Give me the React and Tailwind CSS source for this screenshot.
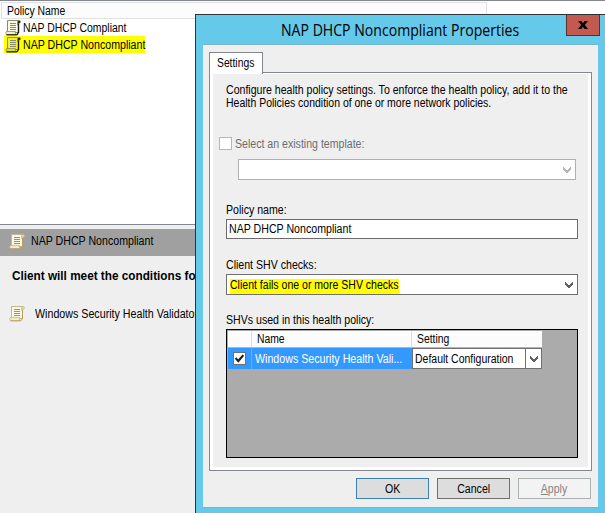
/**
 * App.jsx
 *
 * Network Policy Server console: health policy list with the
 * properties dialog of one policy open over it.
 */

import clsx from 'clsx'

export default function App() {
  return (
    <div className="relative h-[513px] w-[605px] overflow-hidden bg-[#efefef] font-['Liberation_Sans',sans-serif] text-[12px] leading-[14px] text-black">
      <PolicyList />
      <PolicyDetails />
      <PropertiesDialog />
    </div>
  )
}

// ── Console behind the dialog ─────────────────────────────────────────────────

function PolicyList() {
  return (
    <div className="h-[225px] border-y border-[#828790] bg-white pt-px">
      <div className="ml-px flex h-[17px] w-[486px] items-center border border-[#e0e0e0] bg-[#fcfcfc] pl-[5px]">
        <Text className="scale-x-[0.865]">Policy Name</Text>
      </div>
      <div className="flex h-[17px] items-center pl-[5px]">
        <ScrollIcon dark />
        <Text className="ml-[2px] scale-x-[0.87]">NAP DHCP Compliant</Text>
      </div>
      <div className="ml-[4px] flex h-[17px] w-[141px] items-center bg-[#ffff00] pl-px">
        <ScrollIcon dark yellow />
        <Text className="ml-[2px] scale-x-[0.885]">NAP DHCP Noncompliant</Text>
      </div>
    </div>
  )
}

function PolicyDetails() {
  return (
    <div className="pt-[4px]">
      <div className="flex h-[27px] items-center bg-[#a0a0a0] pb-px pl-[9px]">
        <ScrollIcon />
        <Text className="ml-[6px] -mt-[2px] scale-x-[0.885]">NAP DHCP Noncompliant</Text>
      </div>
      <div className="mt-[13px] flex pl-[12px]">
        <Text className="scale-x-[0.98] font-bold">Client will meet the conditions for</Text>
      </div>
      <div className="mt-[23px] flex items-center pl-[9px]">
        <ScrollIcon />
        <Text className="ml-[10px] scale-x-[0.89]">Windows Security Health Validator</Text>
      </div>
    </div>
  )
}

// ── Dialog ────────────────────────────────────────────────────────────────────

function PropertiesDialog() {
  return (
    <div className="absolute top-[14px] left-[195px] h-[510px] w-[420px] border-t border-l border-[#2b3338] bg-[#65c9ea]">
      <div className="flex h-[29px] pl-[85px]">
        <h1 className="w-[232px] pt-[5px] font-['Open_Sans',sans-serif] text-[16px] leading-[20px] whitespace-nowrap">
          <Text className="scale-x-[0.88]">NAP DHCP Noncompliant Properties</Text>
        </h1>
        <button className="ml-[53px] flex h-[21px] w-[34px] items-center justify-center border border-t-0 border-[#5c2f30] bg-[#c35a50]">
          <svg width="10" height="8" viewBox="0 0 10 8">
            <path d="M0 0h3.4L5 2.2 6.6 0H10L6.8 4 10 8H6.5L5 5.8 3.5 8H0l3.2-4z" />
          </svg>
        </button>
      </div>
      <div className="ml-[7px] h-[464px] w-[395px] border-t border-b border-[#7eb3c6] bg-[#efefef] pt-[7px] pl-[6px]">
        <div className="relative z-10 flex h-[22px] w-[54px] items-center border border-b-0 border-[#828790] bg-white pl-[7px]">
          <Text className="-mt-px scale-x-[0.86]">Settings</Text>
        </div>
        <div className="-mt-[2px] h-[399px] w-[383px] border border-[#828790] bg-white pt-px pr-[3px] pb-[3px] pl-[3px]">
          <SettingsPage />
        </div>
        <div className="mt-[7px] flex gap-[8px] pl-[147px]">
          <DialogButton className="border-[#3c7fb1] bg-[#dddddd]">OK</DialogButton>
          <DialogButton className="border-[#707070] bg-[#dddddd]">Cancel</DialogButton>
          <DialogButton className="border-[#adb2b5] bg-[#f3f3f3] text-[#838383]">
            <span className="underline">A</span>pply
          </DialogButton>
        </div>
      </div>
    </div>
  )
}

function SettingsPage() {
  return (
    <div className="h-full bg-[#efefef] pt-[10px] pl-[10px]">
      <p className="h-[26px] pl-[3px] leading-[13px]">
        <Text className="scale-x-[0.881]">Configure health policy settings. To enforce the health policy, add it to the</Text>
        <br />
        <Text className="scale-x-[0.872]">Health Policies condition of one or more network policies.</Text>
      </p>

      <div className="mt-[27px] -ml-[4px] flex h-[13px] items-center">
        <span className="h-[13px] w-[13px] border border-[#b2b7ba] bg-white" />
        <Text className="ml-[3px] scale-x-[0.882] text-[#6d6d6d]">Select an existing template:</Text>
      </div>
      <div className="mt-[9px] ml-[15px] flex h-[21px] w-[338px] items-center justify-end border border-[#afb0b1] bg-white pr-[4px] text-[#b4b4b4]">
        <Chevron />
      </div>

      <Label className="mt-[23px]">Policy name:</Label>
      <div className="mt-[2px] ml-[3px] flex h-[20px] w-[352px] items-center border border-[#6b6b6b] bg-white pl-[2px]">
        <Text className="scale-x-[0.885]">NAP DHCP Noncompliant</Text>
      </div>

      <Label className="mt-[19px]">Client SHV checks:</Label>
      <div className="mt-[2px] ml-[3px] flex h-[21px] w-[352px] items-center border border-[#707070] bg-white pr-[4px] pl-[3px]">
        <div className="mt-[3px] flex h-[15px] w-[169px] items-center bg-[#ffff00]">
          <Text className="-mt-[3px] scale-x-[0.878]">Client fails one or more SHV checks</Text>
        </div>
        <span className="ml-auto text-[#606060]"><Chevron /></span>
      </div>

      <Label className="mt-[18px]">SHVs used in this health policy:</Label>
      <ShvTable />
    </div>
  )
}

function ShvTable() {
  return (
    <div className="mt-[2px] ml-[3px] h-[129px] w-[352px] border border-black bg-[#ababab] pt-px pl-px">
      <div className="flex h-[17px] w-[314px] border-b border-[#b4b4b4] bg-[#fcfcfc]">
        <div className="w-[24px] border-r border-[#dedede]" />
        <div className="flex w-[160px] items-center border-r border-[#dedede] pl-[5px]">
          <Text className="scale-x-[0.86]">Name</Text>
        </div>
        <div className="flex items-center pl-[5px]">
          <Text className="scale-x-[0.865]">Setting</Text>
        </div>
      </div>
      <div className="flex h-[21px] w-[314px] bg-[#3399ff]">
        <div className="flex w-[24px] items-center justify-center border-r border-[#a0a0a0]">
          <span className="flex h-[13px] w-[13px] items-center justify-center border border-[#707070] bg-white">
            <svg width="9" height="9" viewBox="0 0 9 9" fill="none" stroke="#212121" strokeWidth="2.2">
              <path d="M.5 4l2.8 3L8.3 1.2" />
            </svg>
          </span>
        </div>
        <div className="flex w-[160px] items-center pl-[3px] text-white">
          <Text className="scale-x-[0.888]">Windows Security Health Vali...</Text>
        </div>
        <div className="flex w-[130px] items-center border border-[#707070] bg-white pl-[2px]">
          <Text className="w-[105px] scale-x-[0.873]">Default Configuration</Text>
          <span className="ml-auto flex h-full w-[16px] shrink-0 items-center justify-center border-l border-[#707070] text-[#606060]">
            <Chevron />
          </span>
        </div>
      </div>
    </div>
  )
}

// ── Sub-components ────────────────────────────────────────────────────────────

function Text({ className, children }) {
  return <span className={clsx('inline-block origin-left whitespace-nowrap', className)}>{children}</span>
}

function Label({ className, children }) {
  return (
    <div className={clsx('h-[14px] pl-[3px]', className)}>
      <Text className="scale-x-[0.882]">{children}</Text>
    </div>
  )
}

function DialogButton({ className, children }) {
  return (
    <button className={clsx('flex h-[21px] w-[73px] items-center justify-center border', className)}>
      <span className="inline-block scale-x-[0.88]">{children}</span>
    </button>
  )
}

function Chevron() {
  return (
    <svg width="8" height="6" viewBox="0 0 8 6" fill="currentColor" shapeRendering="crispEdges">
      <path d="M0 0h1v1h1v1h1v1h2V2h1V1h1V0h1v3H7v1H6v1H5v1H3V5H2V4H1V3H0z" />
    </svg>
  )
}

// Parchment scroll; the list view has a hard black shadow, the detail pane a soft tan one
function ScrollIcon({ dark, yellow }) {
  const paper = yellow ? '#f2f224' : '#fbf8e6'
  const edge = dark ? '#8a896c' : '#c2b78c'
  const shade = dark ? '#1c1c14' : '#b39c5c'
  const lines = dark ? '#8a8a78' : '#8f8daa'
  return (
    <svg className="shrink-0" width="16" height="16" viewBox="0 0 16 16">
      <path d="M2.500 .500h11v12h-11z" fill={paper} stroke={edge} />
      <path d="M12.500 4.500V2q0-1.500 1.500-1.500t1.500 1.200q0 1.300-1.300 1.800z" fill={dark ? shade : '#e2d49c'} stroke={edge} strokeWidth=".6" />
      <path d="M13.500 4v9" stroke={shade} strokeWidth={dark ? 1.400 : 1} />
      <path d="M1.500 11.500h9q-.8 1.500.6 3h-9.600q-1.600-1.500 0-3z" fill={yellow ? '#e2e200' : '#f4ecc8'} stroke={edge} strokeWidth=".8" />
      <path d="M1.500 14.900h9.500q2 0 2-2.400" fill="none" stroke={shade} strokeWidth={dark ? 1.300 : 0.9} />
      <path d="M5 3.500h6M5 5.500h6M5 7.500h6M5 9.500h6" stroke={lines} shapeRendering="crispEdges" />
    </svg>
  )
}
